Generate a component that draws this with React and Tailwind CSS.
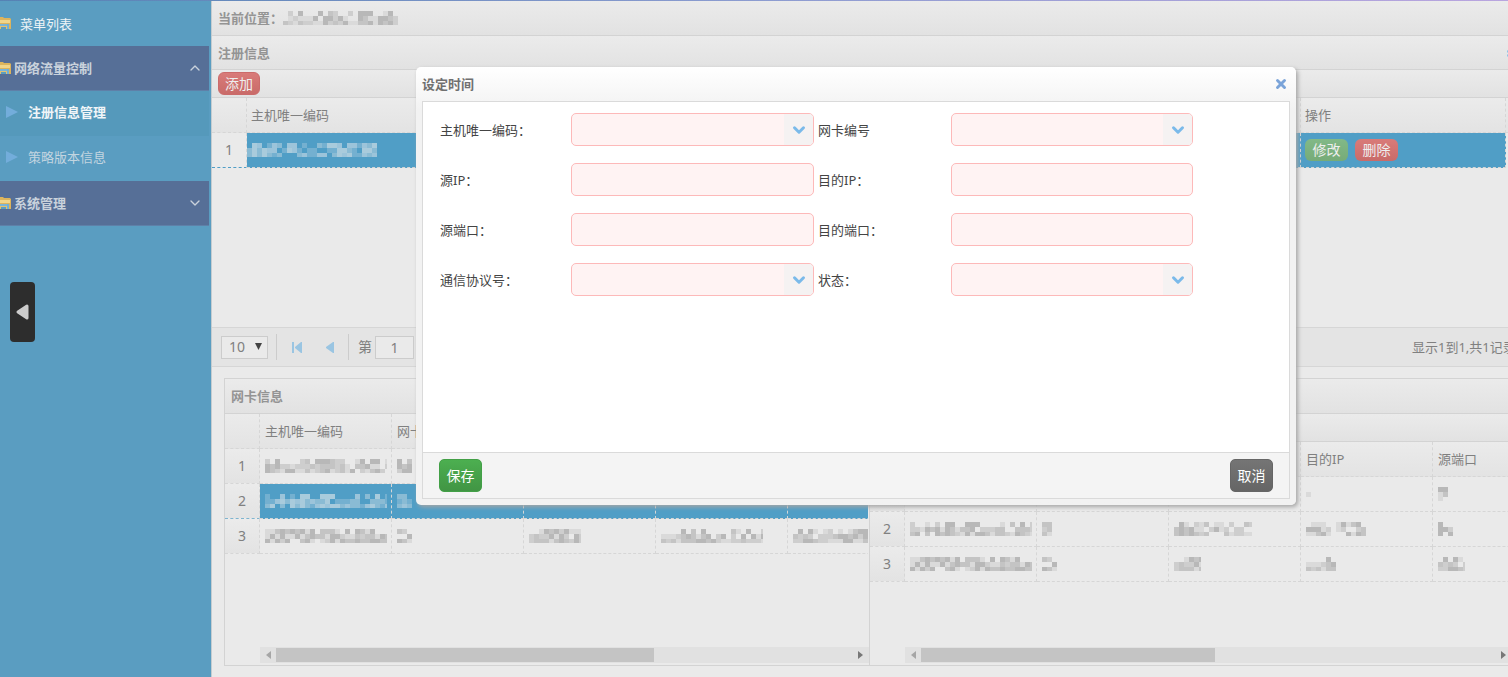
import { ChevronDown, ChevronUp, X } from "lucide-react";

const BAR = "bg-linear-to-b from-[#ebebeb] to-[#e2e2e2] border-b border-[#d3d3d3]";
const CELL = "h-[35px] border-r border-b border-dashed border-[#d6d6d6] p-0";

// Pixelated value: blocks of 5px in a few tones, fixed by the seed
function Masked({ width, seed = 1, light = false }) {
  const tones = light
    ? ["#a9cbdc", "#8abbd4", "#74b0d0", "#9cc4da"]
    : ["#b8b8b8", "#c4c4c4", "#cecece", "#dadada"];
  const cells = [];
  let n = seed * 7919 + 17;
  for (let x = 0; x < width; x += 5) {
    for (let y = 0; y < 3; y++) {
      n = (n * 1103515245 + 12345) % 2147483648;
      const r = Math.floor(n / 65536) % 9;
      const limit = y === 0 ? 5 : 8;
      if (r < limit) {
        cells.push(<rect key={`${x}-${y}`} x={x} y={y * 5} width={Math.min(5, width - x)} height={y === 2 ? 4 : 5} fill={tones[r % 4]} />);
      }
    }
  }
  return (
    <svg width={width} height="14" shapeRendering="crispEdges" className="block shrink-0" aria-hidden="true">
      {cells}
    </svg>
  );
}

function FolderIcon() {
  return (
    <svg width="11" height="13" viewBox="0 0 11 13" className="shrink-0" aria-hidden="true">
      <path d="M0 0h3l1 1h6l1 1v10H0z" fill="#dcb45c" />
      <path d="M0 3h10v3H0z" fill="#f0d58a" />
      <path d="M0 7h9v5H7V9H0z" fill="#6fb0da" />
      <path d="M0 7h7v2H0z" fill="#79b4d8" />
      <path d="M0 9h7v3H0z" fill="#e0c274" />
      <path d="M1 10h5v2H1z" fill="#5a9dc1" />
    </svg>
  );
}

function Arrow({ left = false, className = "" }) {
  return (
    <svg width="5" height="8" viewBox="0 0 5 8" className={className} aria-hidden="true">
      <path d={left ? "M5 0v8L0 4z" : "M0 0v8l5-4z"} fill="currentColor" />
    </svg>
  );
}

function MenuGroup({ title, open }) {
  const Icon = open ? ChevronUp : ChevronDown;
  return (
    <button type="button" className="flex h-[45px] w-[209px] items-center gap-[3px] border-b border-[#5f80a8] bg-[#566f97] pr-[6px] text-left font-bold text-[#c9d2dc]">
      <FolderIcon />
      <span className="flex-1">{title}</span>
      <Icon size={16} strokeWidth={2} />
    </button>
  );
}

function MenuItem({ title, active }) {
  return (
    <a href="#" className={`flex h-[45px] w-[209px] items-center gap-[10px] pb-1 pl-[6px] ${active ? "bg-[#5599bb] font-bold text-[#f0f5f8]" : "text-[#c3d5e0]"}`}>
      <svg width="12" height="12" viewBox="0 0 12 12" aria-hidden="true">
        <path d="M0 0l12 6-12 6z" fill="#73addb" />
      </svg>
      {title}
    </a>
  );
}

function Sidebar() {
  return (
    <nav className="w-[212px] shrink-0 border-r border-[#c4ccd0] bg-[#5a9dc1]">
      <div className="flex h-[45px] items-center gap-[9px] text-[#eef4f7]">
        <FolderIcon />
        菜单列表
      </div>
      <MenuGroup title="网络流量控制" open />
      <MenuItem title="注册信息管理" active />
      <MenuItem title="策略版本信息" />
      <MenuGroup title="系统管理" />
    </nav>
  );
}

function ScrollBar({ thumb, className = "" }) {
  return (
    <div className={`mb-[2px] ml-[35px] flex h-4 items-center gap-[5px] bg-[#e1e1e1] pl-[6px] text-[#777777] ${className}`}>
      <Arrow left className="text-[#a6a6a6]" />
      <div className={`h-[14px] bg-[#c4c4c4] ${thumb}`} />
      <Arrow className="ml-auto" />
    </div>
  );
}

function DataTable({ columns, rows, selected }) {
  return (
    <table className="w-[695px] table-fixed border-separate border-spacing-0">
      <colgroup>
        <col className="w-[35px]" />
        {columns.map((c, i) => <col key={i} className="w-[132px]" />)}
      </colgroup>
      <thead>
        <tr className="bg-linear-to-b from-[#ebebeb] to-[#e3e3e3]">
          <th className={CELL} />
          {columns.map((c, i) => (
            <th key={i} className={`${CELL} pl-[5px] text-left font-normal`}>{c}</th>
          ))}
        </tr>
      </thead>
      <tbody>
        {rows.map((row, i) => (
          <tr key={i}>
            <td className={`${CELL} bg-linear-to-b from-[#ebebeb] to-[#e3e3e3] text-center text-sm ${selected === i ? "border-b-[#7fb4cf]" : ""}`}>{i + 1}</td>
            {row.map((w, j) => (
              <td key={j} className={`${CELL} pl-[5px] ${selected === i ? "border-[#8dbdd6] bg-[#509ec6]" : ""}`}>
                {w > 0 && <Masked width={w} seed={i * 5 + j + 2} light={selected === i} />}
              </td>
            ))}
          </tr>
        ))}
      </tbody>
    </table>
  );
}

function MainGrid() {
  return (
    <div className="h-[229px]">
      <table className="w-full table-fixed border-separate border-spacing-0">
        <colgroup>
          <col className="w-[35px]" />
          <col />
          <col className="w-[205px]" />
          <col className="w-[2px]" />
        </colgroup>
        <thead>
          <tr className="bg-linear-to-b from-[#ebebeb] to-[#e3e3e3]">
            <th className={CELL} />
            <th className={`${CELL} pl-1 text-left font-normal`}>主机唯一编码</th>
            <th className={`${CELL} pl-1 text-left font-normal`}>操作</th>
            <th className={`${CELL} border-r-0`} />
          </tr>
        </thead>
        <tbody>
          <tr>
            <td className={`${CELL} border-b-[#509ec6] text-center text-sm`}>1</td>
            <td className={`${CELL} border-[#8dbdd6] bg-[#509ec6]`}><Masked width={130} seed={9} light /></td>
            <td className={`${CELL} border-[#8dbdd6] bg-[#509ec6] pl-1`}>
              <div className="flex gap-[7px] text-sm text-[#eeeeee]">
                <button type="button" className="h-[22px] w-[43px] rounded-md bg-linear-to-b from-[#82b987] to-[#76ab78]">修改</button>
                <button type="button" className="h-[22px] w-[43px] rounded-md bg-linear-to-b from-[#d97b79] to-[#c96b69]">删除</button>
              </div>
            </td>
            <td className="p-0" />
          </tr>
        </tbody>
      </table>
    </div>
  );
}

function Pager() {
  return (
    <div className="flex h-10 items-center border-y border-[#d6d6d6] bg-[#e4e4e4] pl-[9px]">
      <div className="relative">
        <select aria-label="每页条数" className="block h-[23px] w-[47px] appearance-none border border-[#cccccc] bg-[#eaeaea] pl-[7px] text-sm outline-none">
          <option>10</option>
        </select>
        <span className="pointer-events-none absolute top-[7px] right-[6px] text-[#444444]">
          <svg width="7" height="8" viewBox="0 0 7 8" className="block" aria-hidden="true"><path d="M0 0h7L3.5 7z" fill="currentColor" /></svg>
        </span>
      </div>
      <span className="ml-2 h-[26px] w-px bg-[#cccccc]" />
      <button type="button" aria-label="首页" className="ml-[15px] text-[#9ac5e2]">
        <svg width="10" height="11" viewBox="0 0 10 11" aria-hidden="true"><path d="M0 0h2v11H0zM9 0h1v11H9L3 6V5z" fill="currentColor" /></svg>
      </button>
      <button type="button" aria-label="上一页" className="ml-[24px] text-[#9ac5e2]">
        <svg width="8" height="11" viewBox="0 0 8 11" aria-hidden="true"><path d="M7 0h1v11H7L0 6V5z" fill="currentColor" /></svg>
      </button>
      <span className="ml-[14px] h-[26px] w-px bg-[#cccccc]" />
      <label className="ml-[9px] flex items-center gap-[3px] text-sm">
        第
        <input defaultValue="1" className="h-[23px] w-[39px] border border-[#cccccc] bg-[#eaeaea] text-center text-sm outline-none" />
      </label>
      <span className="ml-auto w-24 text-[13px] whitespace-nowrap">显示1到1,共1记录</span>
    </div>
  );
}

function Field({ id, label, combo, second }) {
  const box = "block h-[33px] w-full rounded-[5px] border border-[#fdb9b9] bg-[#fff3f3] px-2 outline-none";
  return (
    <>
      <label htmlFor={id} className={second ? "pl-1" : ""}>{label}</label>
      <div className="relative">
        {combo ? (
          <>
            <select id={id} className={`${box} appearance-none`} />
            <span className="pointer-events-none absolute top-px right-px flex h-[31px] w-[29px] items-center justify-center rounded-r bg-[#f5f2f2] text-[#7abaea]">
              <ChevronDown size={18} strokeWidth={4} />
            </span>
          </>
        ) : (
          <input id={id} className={box} />
        )}
      </div>
    </>
  );
}

function TimeDialog() {
  return (
    <section role="dialog" aria-label="设定时间" className="absolute top-[67px] left-[416px] flex h-[438px] w-[880px] flex-col rounded-[5px] bg-linear-to-b from-white to-[#f2f2f2] to-10% px-[6px] pb-[6px] shadow-[2px_2px_4px_#a6a6a6]">
      <header className="flex h-[34px] shrink-0 items-center justify-between pr-[2px] font-bold text-[#707070]">
        设定时间
        <button type="button" aria-label="关闭" className="text-[#7ba4d9]"><X size={14} strokeWidth={5} /></button>
      </header>
      <div className="flex-1 border border-[#dadada] bg-white px-[17px] pt-[11px] text-[#444444]">
        <form className="grid grid-cols-[131px_243px_137px_242px] items-center gap-y-[17px]">
          <Field id="host" label="主机唯一编码：" combo />
          <Field id="card" label="网卡编号" combo second />
          <Field id="srcIp" label="源IP：" />
          <Field id="dstIp" label="目的IP：" second />
          <Field id="srcPort" label="源端口：" />
          <Field id="dstPort" label="目的端口：" second />
          <Field id="protocol" label="通信协议号：" combo />
          <Field id="status" label="状态：" combo second />
        </form>
      </div>
      <footer className="flex h-[46px] shrink-0 items-center justify-between border border-t-0 border-[#dadada] bg-[#f4f4f4] px-4 text-sm text-white">
        <button type="button" className="h-[33px] w-[43px] rounded-[5px] border border-[#43a047] bg-linear-to-b from-[#4caf50] to-[#419544]">保存</button>
        <button type="button" className="h-[33px] w-[43px] rounded-[5px] border border-[#666666] bg-linear-to-b from-[#757575] to-[#656565]">取消</button>
      </footer>
    </section>
  );
}

export default function App() {
  return (
    <div className="relative flex h-screen flex-col overflow-hidden bg-[#eaeaea] font-['Noto_Sans','Noto_Sans_CJK_SC',sans-serif] text-[13px] leading-5 text-[#808080]">
      <div className="h-px shrink-0 bg-linear-to-r from-[#5582b4] via-[#8c9cd0] to-[#b9a5df]" />
      <div className="flex min-h-0 flex-1">
        <Sidebar />
        <main className="flex min-w-0 flex-1 flex-col">
          <div className={`flex h-[35px] shrink-0 items-center pl-[6px] font-bold text-[#949494] ${BAR}`}>
            当前位置：
            <Masked width={115} seed={4} />
          </div>
          <div className={`flex h-[34px] shrink-0 items-center justify-between pl-[6px] font-bold text-[#949494] ${BAR}`}>
            注册信息
            <button type="button" aria-label="折叠" className="w-px overflow-visible text-[#8fc3e8]">
              <svg width="8" height="8" viewBox="0 0 8 8" aria-hidden="true"><path d="M0 3l4-3 4 3M0 7l4-3 4 3" fill="none" stroke="currentColor" strokeWidth="2" /></svg>
            </button>
          </div>
          <div className={`flex h-7 shrink-0 items-center pl-[6px] ${BAR}`}>
            <button type="button" className="h-[23px] w-[42px] rounded-md border border-[#cb6b6b] bg-linear-to-b from-[#d97b79] to-[#c96b69] text-sm text-[#eeeeee]">添加</button>
          </div>
          <MainGrid />
          <Pager />
          <div className="mt-[11px] mb-[11px] ml-[12px] flex min-h-0 flex-1 border border-r-0 border-[#d3d3d3]">
            <section className="flex w-[645px] shrink-0 flex-col border-r border-[#d3d3d3]">
              <h2 className={`flex h-[35px] shrink-0 items-center pl-[6px] font-bold text-[#949494] ${BAR}`}>网卡信息</h2>
              <div className="mr-px flex-1 overflow-hidden">
                <DataTable
                  columns={["主机唯一编码", "网卡编号", "", "", ""]}
                  rows={[[122, 15, 0, 0, 0], [122, 15, 0, 0, 0], [122, 15, 52, 102, 80]]}
                  selected={1}
                />
              </div>
              <ScrollBar thumb="w-[378px]" className="pr-[6px]" />
            </section>
            <section className="flex min-w-0 flex-1 flex-col">
              <div className={`h-[35px] shrink-0 ${BAR}`} />
              <div className={`h-7 shrink-0 ${BAR}`} />
              <div className="flex-1 overflow-hidden">
                <DataTable
                  columns={["", "", "", "目的IP", "源端口"]}
                  rows={[[0, 0, 0, 5, 10], [122, 10, 78, 60, 15], [122, 15, 27, 30, 27]]}
                />
              </div>
              <ScrollBar thumb="w-[294px]" className="pr-[2px]" />
            </section>
          </div>
        </main>
      </div>

      <TimeDialog />

      <button type="button" aria-label="收起菜单" className="absolute top-[282px] left-[10px] flex h-[60px] w-[25px] items-center justify-center rounded bg-[#2d2d2d]">
        <svg width="13" height="16" viewBox="0 0 13 16" aria-hidden="true">
          <path d="M11 2v12L2 8z" fill="#cccccc" stroke="#cccccc" strokeWidth="3" strokeLinejoin="round" />
        </svg>
      </button>
    </div>
  );
}
